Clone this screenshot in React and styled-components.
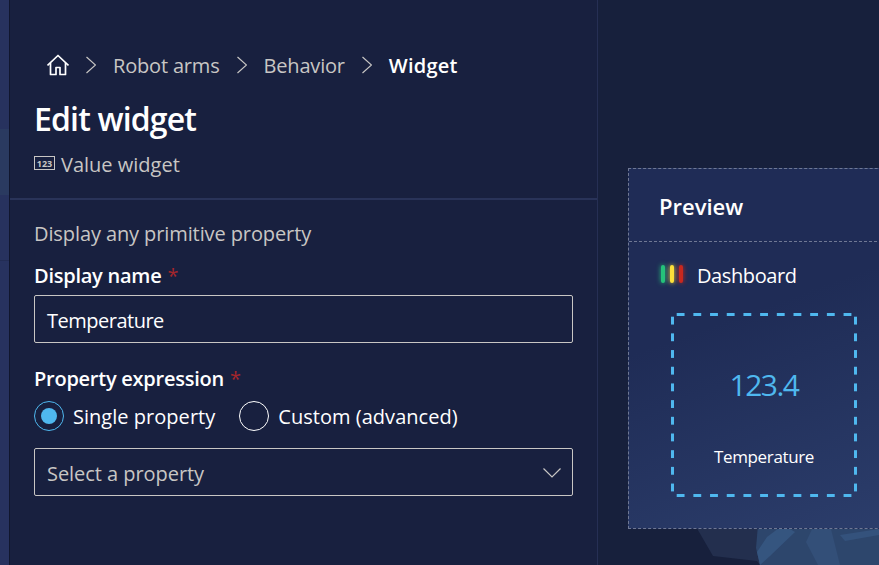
import React from 'react';
import styled, { createGlobalStyle } from 'styled-components';

const GlobalStyle = createGlobalStyle`
  html, body {
    margin: 0;
    height: 100%;
    overflow: hidden;
    background: #18203f;
  }

  * {
    box-sizing: border-box;
  }
`;

const Page = styled.div`
  display: flex;
  width: 879px;
  height: 565px;
  overflow: hidden;
  font-family: "Open Sans", "Noto Sans", sans-serif;
  font-size: 20px;
  letter-spacing: -0.1px;
  color: #fff;
`;

const Rail = styled.div`
  flex: 0 0 9px;
  background: linear-gradient(
    180deg,
    #27325e 0 129px,
    #2a3a60 129px 195px,
    #27325e 195px 260px,
    #222c54 260px 261px,
    #27325f 261px
  );
`;

const Panel = styled.section`
  flex: 0 0 589px;
  background: #18203f;
  border-left: 1px solid #10162e;
  border-right: 1px solid #262f54;
`;

const Header = styled.header`
  height: 200px;
  padding: 51px 0 0 24px;
  border-bottom: 2px solid #293359;
`;

const Breadcrumb = styled.nav`
  display: flex;
  align-items: center;
  height: 28px;
  padding-left: 13px;
`;

const Crumb = styled.span`
  color: ${(p) => (p.$current ? '#fff' : '#c8c6c4')};
  font-weight: ${(p) => (p.$current ? 600 : 400)};
  letter-spacing: ${(p) => (p.$current ? '0.2px' : '-0.18px')};
`;

const SeparatorIcon = styled.svg`
  flex: none;
  margin: 0 17px;
`;

const Title = styled.h1`
  margin: 20px 0 0;
  font-size: 32px;
  line-height: 40px;
  font-weight: 600;
  letter-spacing: -0.85px;
`;

const Kind = styled.div`
  display: flex;
  align-items: center;
  gap: 6px;
  margin-top: 12px;
  line-height: 28px;
  letter-spacing: 0;
  color: #c8c6c4;

  svg {
    margin-top: -3px;
  }
`;

const Form = styled.div`
  padding: 20px 24px 0;
`;

const Hint = styled.p`
  margin: 0;
  line-height: 28px;
  color: #c8c6c4;
`;

const Label = styled.label`
  display: block;
  margin-top: ${(p) => p.$top}px;
  margin-bottom: ${(p) => p.$bottom || 0}px;
  line-height: 28px;
  font-weight: 600;
  letter-spacing: -0.25px;

  span {
    margin-left: 6px;
    color: #a4262c;
    font-weight: 400;
  }
`;

const Input = styled.div`
  display: flex;
  align-items: center;
  justify-content: space-between;
  width: 539px;
  height: 48px;
  padding: 2px 11px 0 12px;
  border: 1px solid #c8c6c4;
  border-radius: 2px;
  color: ${(p) => (p.$placeholder ? '#c8c6c4' : '#fff')};
  letter-spacing: ${(p) => (p.$placeholder ? '-0.05px' : '-0.5px')};
`;

const RadioRow = styled.div`
  display: flex;
  align-items: center;
  gap: 24px;
  height: 40px;
  margin: 3px 0 12px;
  letter-spacing: 0.03px;
`;

const Radio = styled.div`
  display: flex;
  align-items: center;
  gap: 9px;
`;

const Circle = styled.span`
  display: flex;
  align-items: center;
  justify-content: center;
  width: 30px;
  height: 30px;
  border-radius: 50%;
  border: 1px solid ${(p) => (p.$on ? '#4fb8ef' : '#fff')};

  &::after {
    content: '';
    display: ${(p) => (p.$on ? 'block' : 'none')};
    width: 16px;
    height: 16px;
    border-radius: 50%;
    background: #4fb8ef;
  }
`;

const Stage = styled.main`
  position: relative;
  flex: 1;
  padding: 168px 0 0 30px;
  background: #17203c;
  overflow: hidden;
`;

const Backdrop = styled.svg`
  position: absolute;
  left: 0;
  bottom: 0;
  filter: blur(0.7px);
`;

const Card = styled.article`
  position: relative;
  width: 300px;
  height: 361px;
  border: 1px dashed #6f7894;
  background: linear-gradient(160deg, #1f2c56 0%, #1f2c56 40%, #2c3e6c 100%);
`;

const CardTitle = styled.h2`
  height: 73px;
  margin: 0;
  padding-left: 30px;
  border-bottom: 1px dashed #6f7894;
  font-size: 22px;
  font-weight: 600;
  line-height: 74px;
  letter-spacing: 0;
`;

const DashboardRow = styled.div`
  display: flex;
  align-items: center;
  gap: 14px;
  height: 66px;
  margin-bottom: 5px;
  padding-left: 32px;
  letter-spacing: -0.4px;
`;

const Lights = styled.div`
  display: flex;
  gap: 5px;
  margin-top: -2px;
`;

const Light = styled.i`
  width: 4px;
  height: 18px;
  border-radius: 2px;
  background: ${(p) => p.$color};
  box-shadow: 0 0 5px ${(p) => p.$color};
`;

const Tile = styled.div`
  display: flex;
  flex-direction: column;
  align-items: center;
  width: 186px;
  height: 184px;
  margin-left: 42px;
  background-image:
    linear-gradient(90deg, #4fb8ef 8px, transparent 8px),
    linear-gradient(90deg, #4fb8ef 8px, transparent 8px),
    linear-gradient(180deg, #4fb8ef 8px, transparent 8px),
    linear-gradient(180deg, #4fb8ef 8px, transparent 8px);
  background-size: 16.7px 3px, 16.7px 3px, 3px 16.7px, 3px 16.7px;
  background-position: 5.7px 0, 5.7px 100%, 0 3.7px, 100% 3.7px;
  background-repeat: repeat-x, repeat-x, repeat-y, repeat-y;
`;

const Value = styled.div`
  margin-top: 52px;
  font-size: 30px;
  line-height: 40px;
  font-weight: 400;
  letter-spacing: -1.5px;
  color: #4fb8ef;
`;

const Caption = styled.div`
  margin-top: 40px;
  font-size: 17px;
  line-height: 24px;
  letter-spacing: -0.35px;
`;

function HomeIcon() {
  return (
    <svg width="22" height="24" viewBox="1 0 22 24" fill="none" stroke="#fff" strokeWidth="1.7" strokeLinejoin="round">
      <path d="M1.5 12.5 12 2.5l10.5 10" />
      <path d="M4.5 10v11.500h5.500v-7h4v7h5.500V10" />
    </svg>
  );
}

function Separator() {
  return (
    <SeparatorIcon width="10" height="18" viewBox="0 0 10 18" fill="none" stroke="#c8c6c4" strokeWidth="1.2">
      <path d="M0.500 1l9 8-9 8" />
    </SeparatorIcon>
  );
}

function CaretIcon() {
  return (
    <svg width="18" height="10" viewBox="0 0 18 10" fill="none" stroke="#c8c6c4" strokeWidth="1.2">
      <path d="M0.500 0.500 9 9l8.500-8.500" />
    </svg>
  );
}

function ValueIcon() {
  return (
    <svg width="21" height="15" viewBox="0 0 21 15" fill="none">
      <rect x="0.500" y="0.500" width="20" height="13" stroke="#c8c6c4" />
      <text x="10.500" y="10.500" textAnchor="middle" fontSize="9" fontWeight="700" letterSpacing="0" fill="#c8c6c4">123</text>
    </svg>
  );
}

function App() {
  return (
    <Page>
      <GlobalStyle />
      <Rail />
      <Panel>
        <Header>
          <Breadcrumb>
            <HomeIcon />
            <Separator />
            <Crumb>Robot arms</Crumb>
            <Separator />
            <Crumb>Behavior</Crumb>
            <Separator />
            <Crumb $current>Widget</Crumb>
          </Breadcrumb>
          <Title>Edit widget</Title>
          <Kind>
            <ValueIcon />
            Value widget
          </Kind>
        </Header>
        <Form>
          <Hint>Display any primitive property</Hint>
          <Label $top={14} $bottom={5}>Display name<span>*</span></Label>
          <Input>Temperature</Input>
          <Label $top={22}>Property expression<span>*</span></Label>
          <RadioRow>
            <Radio>
              <Circle $on />
              Single property
            </Radio>
            <Radio>
              <Circle />
              Custom (advanced)
            </Radio>
          </RadioRow>
          <Input $placeholder>
            Select a property
            <CaretIcon />
          </Input>
        </Form>
      </Panel>
      <Stage>
        <Backdrop width="281" height="40" viewBox="598 525 281 40">
          <path d="M695 525l18 31 44 5 3 4h119v-40z" fill="#232f4e" />
          <path d="M758 525h121v40H760l-4-17z" fill="#2d466c" />
          <path d="M757 552l10-15 16-12 12 7-25 24-10 9z" fill="#35557f" />
          <path d="M806 542l8-17h16l10 40h-22z" fill="#334f78" />
          <path d="M840 535l39-6v6l-34 6z" fill="#34527c" />
        </Backdrop>
        <Card>
          <CardTitle>Preview</CardTitle>
          <DashboardRow>
            <Lights>
              <Light $color="#25c27a" />
              <Light $color="#fde03a" />
              <Light $color="#c8281e" />
            </Lights>
            Dashboard
          </DashboardRow>
          <Tile>
            <Value>123.4</Value>
            <Caption>Temperature</Caption>
          </Tile>
        </Card>
      </Stage>
    </Page>
  );
}

export default App;
